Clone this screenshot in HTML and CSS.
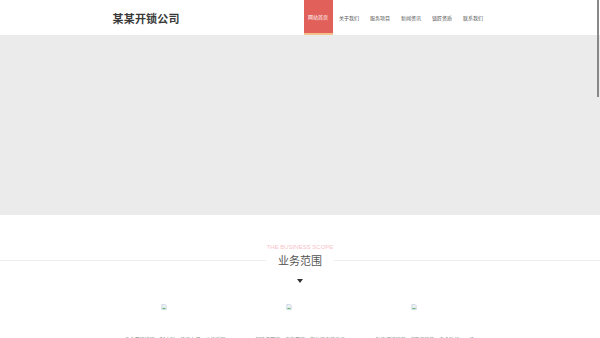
FILE: index.html
```html
<!DOCTYPE html>
<html>
<head>
  <meta charset="utf-8">
  <title>某某开锁公司</title>
  <link rel="stylesheet" href="styles.css">
</head>
<body>
  <header class="top">
    <div class="wrap top-in">
      <div class="logo">某某开锁公司</div>
      <nav class="nav">
        <a class="active" href="#">网站首页</a>
        <a href="#">关于我们</a>
        <a href="#">服务项目</a>
        <a href="#">新闻资讯</a>
        <a href="#">锁匠资质</a>
        <a href="#">联系我们</a>
      </nav>
    </div>
  </header>
  <div class="banner"></div>
  <section class="scope">
    <div class="scope-en">THE BUSINESS SCOPE</div>
    <div class="scope-title"><span>业务范围</span></div>
    <div class="arrow"></div>
    <div class="wrap items">
      <div class="item">
        <svg class="broken" viewBox="0 0 16 16"><path d="M2 1h9l3 3v11H2z" fill="#eef2f8" stroke="#9aa8c0"/><path d="M3 13l3-4 2 3 2-2 3 3z" fill="#5cb85c"/></svg>
        <p>专业开锁换锁，24小时，快速上门，价格透明</p>
      </div>
      <div class="item">
        <svg class="broken" viewBox="0 0 16 16"><path d="M2 1h9l3 3v11H2z" fill="#eef2f8" stroke="#9aa8c0"/><path d="M3 13l3-4 2 3 2-2 3 3z" fill="#5cb85c"/></svg>
        <p>保险柜开锁，汽车开锁，指纹锁安装维修</p>
      </div>
      <div class="item">
        <svg class="broken" viewBox="0 0 16 16"><path d="M2 1h9l3 3v11H2z" fill="#eef2f8" stroke="#9aa8c0"/><path d="M3 13l3-4 2 3 2-2 3 3z" fill="#5cb85c"/></svg>
        <p>防盗门换锁芯，超B级锁芯，安全防护，一流</p>
      </div>
    </div>
  </section>
  <div class="thumb"></div>
</body>
</html>
```

FILE: styles.css
```css
body {
  margin: 0;
  font-family: "Noto Sans CJK SC", "Liberation Sans", sans-serif;
  color: #444;
  background: #fff;
}

.wrap {
  width: 375px;
  margin: 0 auto;
}

.top {
  height: 35px;
}
.top-in {
  display: flex;
  justify-content: space-between;
  align-items: center;
  height: 35px;
}
.logo {
  font-size: 11px;
  font-weight: bold;
  color: #3a3a3a;
  letter-spacing: 0.2px;
  margin-top: 1px;
}
.nav {
  display: flex;
  gap: 2px;
  height: 35px;
}
.nav a {
  width: 29px;
  display: flex;
  align-items: center;
  justify-content: center;
  font-size: 5px;
  color: #555;
  text-decoration: none;
  box-sizing: border-box;
}
.nav a.active {
  background: #e1605a;
  color: #fff;
  border-bottom: 2px solid #f4c38c;
}

.banner {
  height: 180px;
  background: #ebebeb;
}

.scope {
  padding-top: 28px;
  text-align: center;
}
.scope-en {
  font-family: "Liberation Sans", sans-serif;
  font-size: 6px;
  color: #f7c3c9;
  line-height: 8px;
}
.scope-title {
  display: flex;
  align-items: center;
  justify-content: center;
  gap: 12px;
  margin-top: 2px;
}
.scope-title:before, .scope-title:after {
  content: '';
  flex: 1;
  height: 1px;
  background: #eee;
}
.scope-title span {
  font-size: 11px;
  color: #555;
  line-height: 15px;
}
.arrow {
  width: 0;
  height: 0;
  margin: 11px auto 0;
  border-left: 3px solid transparent;
  border-right: 3px solid transparent;
  border-top: 4px solid #333;
}

.items {
  display: grid;
  grid-template-columns: repeat(3, 1fr);
  margin-top: 21px;
}
.item .broken {
  display: block;
  width: 6px;
  height: 6px;
  margin-left: 48px;
}
.item p {
  margin: 25px 0 0;
  font-size: 5px;
  color: #888;
  white-space: nowrap;
}

.thumb {
  position: fixed;
  top: 0;
  right: 1px;
  width: 2px;
  height: 97px;
  background: #888;
}
```
